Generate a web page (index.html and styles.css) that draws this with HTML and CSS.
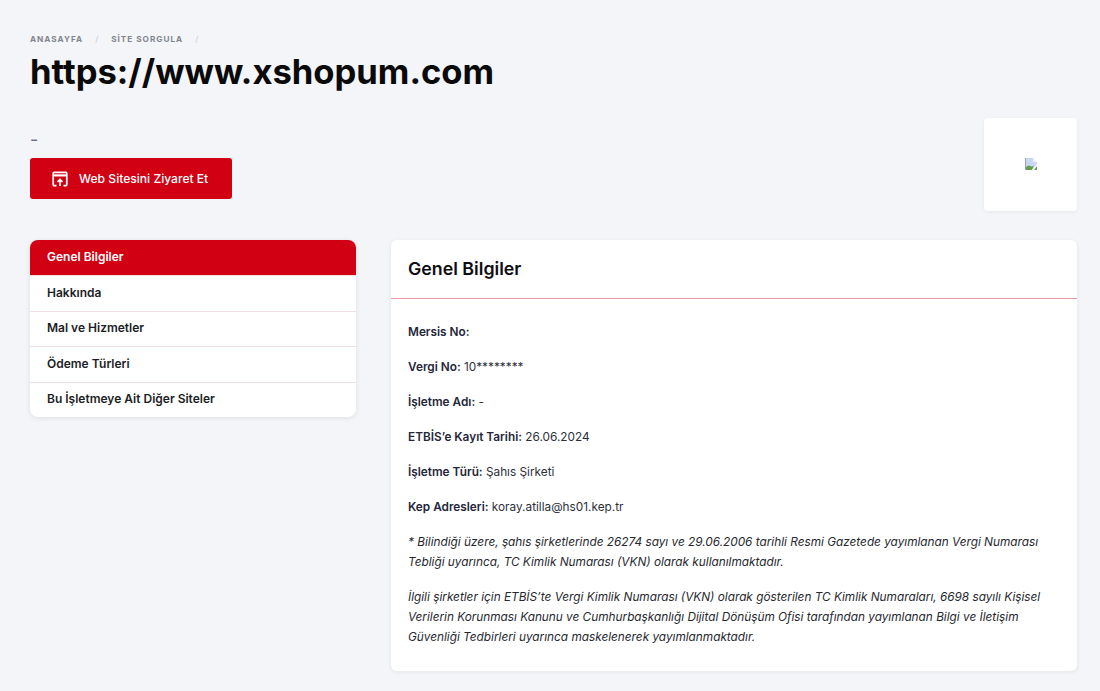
FILE: index.html
```html
<!DOCTYPE html>
<html lang="tr">
<head>
<meta charset="utf-8">
<title>https://www.xshopum.com</title>
<link rel="stylesheet" href="styles.css">
</head>
<body>
<main class="page">
  <nav class="crumbs"><span>ANASAYFA</span><i>/</i><span>SİTE SORGULA</span><i>/</i></nav>
  <h1 class="title">https://www.xshopum.com</h1>
  <section class="head">
    <div class="head-left">
      <p class="dash">-</p>
      <a class="visit" href="#">
        <svg class="visit-icon" viewBox="0 0 16 16" width="16" height="16" fill="none" stroke="#fff" stroke-width="1.7"><path d="M4.5 14.6H2.2a1 1 0 0 1-1-1V2.4a1 1 0 0 1 1-1h11.6a1 1 0 0 1 1 1v11.2a1 1 0 0 1-1 1h-2.3"/><path d="M1.2 4.4h13.6" stroke-width="2.2"/><path d="M8 15V8.6M5.5 10.9 8 8.4l2.5 2.5"/></svg>
        <span>Web Sitesini Ziyaret Et</span>
      </a>
    </div>
    <div class="logo-box">
      <svg class="broken" viewBox="0 0 12 12" width="12" height="12"><path d="M0 0h8l4 4v2l-5 6H0z" fill="#c9d8f0"/><path d="M0 12V9.4l3.5-2 3 1.2 2.2-.8L7 12z" fill="#5fa04e"/><path d="M8 0v4h4z" fill="#eef2f8"/><path d="M12 8v4H9z" fill="#5fa04e"/><path d="M0 0h1v12H0z" fill="#9aa0ac"/></svg>
    </div>
  </section>
  <section class="columns">
    <ul class="menu">
      <li class="active">Genel Bilgiler</li>
      <li>Hakkında</li>
      <li>Mal ve Hizmetler</li>
      <li>Ödeme Türleri</li>
      <li>Bu İşletmeye Ait Diğer Siteler</li>
    </ul>
    <article class="card">
      <h2 class="card-title">Genel Bilgiler</h2>
      <div class="card-body">
        <p><b>Mersis No:</b></p>
        <p><b>Vergi No:</b> 10********</p>
        <p><b>İşletme Adı:</b> -</p>
        <p><b>ETBİS’e Kayıt Tarihi:</b> 26.06.2024</p>
        <p><b>İşletme Türü:</b> Şahıs Şirketi</p>
        <p><b>Kep Adresleri:</b> koray.atilla@hs01.kep.tr</p>
        <p class="note">* Bilindiği üzere, şahıs şirketlerinde 26274 sayı ve 29.06.2006 tarihli Resmi Gazetede yayımlanan Vergi Numarası Tebliği uyarınca, TC Kimlik Numarası (VKN) olarak kullanılmaktadır.</p>
        <p class="note">İlgili şirketler için ETBİS’te Vergi Kimlik Numarası (VKN) olarak gösterilen TC Kimlik Numaraları, 6698 sayılı Kişisel Verilerin Korunması Kanunu ve Cumhurbaşkanlığı Dijital Dönüşüm Ofisi tarafından yayımlanan Bilgi ve İletişim Güvenliği Tedbirleri uyarınca maskelenerek yayımlanmaktadır.</p>
      </div>
    </article>
  </section>
</main>
</body>
</html>
```
FILE: styles.css
```css
* { box-sizing: border-box; }
html, body { margin: 0; height: 100%; }
body {
  background: #f3f5f8;
  font-family: "Inter", "Liberation Sans", sans-serif;
  color: #1f2230;
  overflow: hidden;
}
.page { padding: 33px 23px 0 30px; }
.crumbs {
  display: flex;
  align-items: center;
  height: 11px;
  font-size: 8.2px;
  font-weight: 700;
  letter-spacing: 1px;
  color: #81858d;
}
.crumbs i { font-style: normal; font-weight: 400; color: #c5c8cd; margin: 0 12px; }
.title {
  margin: 5px 0 0;
  font-size: 34.6px;
  line-height: 44px;
  font-weight: 700;
  color: #0a0a0a;
  letter-spacing: 0;
}
.head {
  display: flex;
  justify-content: space-between;
  margin-top: 25px;
}
.head-left { padding-top: 14px; }
.dash { margin: 0; height: 26px; font-size: 18px; line-height: 16px; color: #6b6f78; }
.visit {
  display: flex;
  align-items: center;
  gap: 11px;
  width: 202px;
  height: 41px;
  padding-left: 22px;
  background: #d20013;
  border-radius: 3px;
  color: #fff;
  text-decoration: none;
  font-size: 12.1px;
  font-weight: 500;
}
.visit-icon { flex: none; }
.logo-box {
  width: 93px;
  height: 93px;
  display: flex;
  align-items: center;
  justify-content: center;
  padding-bottom: 1px;
  background: #fff;
  border-radius: 4px;
  box-shadow: 0 1px 4px rgba(30, 40, 60, 0.06);
}
.broken { display: block; }
.columns {
  display: flex;
  align-items: flex-start;
  gap: 35px;
  margin-top: 29px;
}
.menu {
  flex: none;
  width: 326px;
  margin: 0;
  padding: 0;
  list-style: none;
  background: #fff;
  border-radius: 8px;
  overflow: hidden;
  box-shadow: 0 1px 5px rgba(30, 40, 60, 0.1);
}
.menu li {
  height: 35.4px;
  padding: 0 0 2px 17px;
  display: flex;
  align-items: center;
  font-size: 12px;
  font-weight: 600;
  color: #1b1d25;
  border-top: 1px solid #f1dfe2;
}
.menu li.active { background: #d20013; color: #fff; border-top: 0; }
.card {
  flex: 1;
  height: 431px;
  background: #fff;
  border-radius: 6px;
  box-shadow: 0 1px 5px rgba(30, 40, 60, 0.07);
}
.card-title {
  margin: 0;
  height: 59px;
  padding: 0 17px 1px;
  display: flex;
  align-items: center;
  font-size: 17.8px;
  font-weight: 600;
  color: #0e0e12;
  border-bottom: 1px solid #e79aa2;
}
.card-body { padding: 23px 17px 0; }
.card-body p {
  margin: 0 0 15px;
  font-size: 11.8px;
  line-height: 20px;
  color: #2c2f3a;
}
.card-body b { font-weight: 600; color: #24263a; }
.card-body .note { font-style: italic; color: #26282f; }
```
